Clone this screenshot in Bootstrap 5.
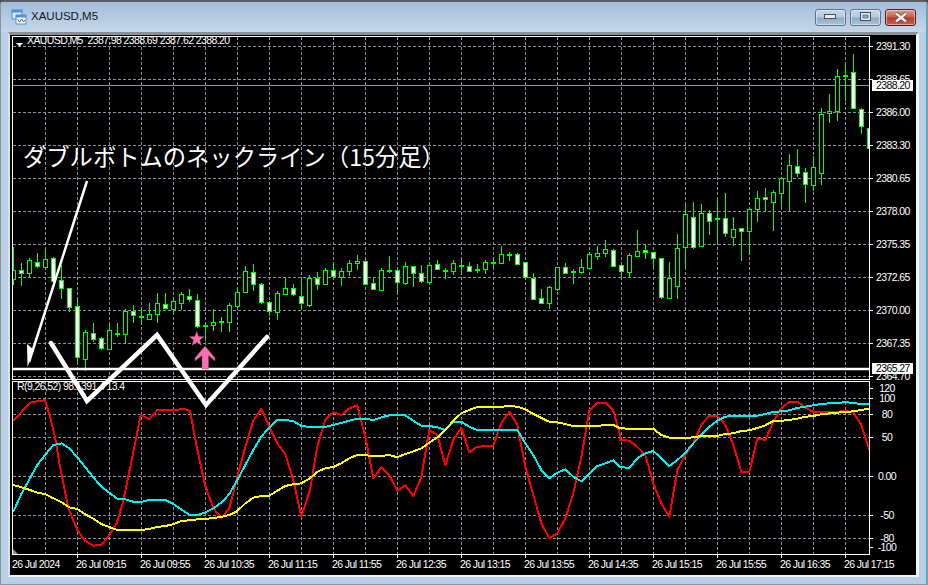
<!DOCTYPE html>
<html lang="ja">
<head>
  <meta charset="UTF-8">
  <title>XAUUSD,M5</title>
  <link rel="stylesheet" href="https://cdn.jsdelivr.net/npm/bootstrap@5.3.0/dist/css/bootstrap.min.css">
  <style>
    html, body { margin: 0; height: 585px; overflow: hidden; background: #4a4d52; }
    .mt-window {
      height: 585px;
      border-top: 2px solid #5b5f64;
      border-left: 1px solid #8c9299;
      border-right: 2px solid #5fa9bb;
      border-bottom: 1px solid #5fa9bb;
      border-radius: 5px 5px 0 0;
      background: #b9cfe6;
      font-family: "Liberation Sans", sans-serif;
    }
    .mt-title {
      height: 30px;
      padding: 0 10px 0 10px;
      background: linear-gradient(#a3bdd9, #c4d7ea);
      color: #10151c;
      font-size: 11.5px;
    }
    .mt-btn {
      width: 31px;
      height: 17px;
      padding: 0;
      border: 1px solid #5f7186;
      border-radius: 3px;
      background: linear-gradient(#c6d7e8 0, #b5cadf 48%, #8ea9c4 52%, #adc4da 100%);
      box-shadow: inset 0 0 0 1px rgba(255,255,255,.45);
    }
    .mt-btn-close {
      border-color: #4b1f2a;
      background: linear-gradient(#dc9a8c 0, #c9604e 48%, #b33a2a 52%, #c4634f 100%);
    }
    .mt-client {
      margin: 0 6px 0 7px;
      width: 911px;
      height: 545px;
      border-top: 3px solid #8b9097;
      border-left: 2px solid #d8e0e8;
      border-right: 3px solid #f2f5f8;
      border-bottom: 2px solid #f2f5f8;
      background: #000;
    }
    .mt-client svg { display: block; }
    .mt-client text {
      font-family: "Liberation Sans", sans-serif;
      font-size: 10.5px;
      letter-spacing: -.6px;
      fill: #fff;
    }
    .mt-client text.note-text {
      font-family: "Noto Sans CJK JP", sans-serif;
      font-size: 23.3px;
      letter-spacing: 0;
    }
  </style>
</head>
<body>
  <div class="mt-window d-flex flex-column">
    <!-- title bar -->
    <div class="mt-title d-flex align-items-center flex-shrink-0">
      <svg width="16" height="16" viewBox="0 0 16 16" class="me-1 flex-shrink-0">
        <rect x="1" y="1" width="10" height="9" fill="#dbe9f8" stroke="#4f8fd6"/>
        <rect x="1" y="1" width="10" height="2.5" fill="#4f8fd6"/>
        <rect x="5" y="6" width="10" height="9" fill="#fff" stroke="#4f8fd6"/>
        <rect x="5" y="6" width="10" height="2.5" fill="#4f8fd6"/>
        <path d="M6.5 10l2 3 2-3 2 3 1.5-2" fill="none" stroke="#2f6fb8"/>
      </svg>
      <span>XAUUSD,M5</span>
      <div class="d-flex gap-1 ms-auto">
        <button class="mt-btn d-flex align-items-center justify-content-center">
          <svg width="13" height="6"><rect x=".5" y=".5" width="11" height="4" fill="#e8edf2" stroke="#44505e"/></svg>
        </button>
        <button class="mt-btn d-flex align-items-center justify-content-center">
          <svg width="12" height="10"><rect x=".5" y=".5" width="10" height="8" fill="#dfe6ee" stroke="#44505e"/><rect x="3" y="3" width="5" height="3" fill="#8ea9c4" stroke="#44505e" stroke-width=".6"/></svg>
        </button>
        <button class="mt-btn mt-btn-close d-flex align-items-center justify-content-center">
          <svg width="14" height="11"><path d="M2 1.5l10 8M12 1.5l-10 8" stroke="#5b3a3a" stroke-width="3.6"/><path d="M2 1.5l10 8M12 1.5l-10 8" stroke="#f4f4f4" stroke-width="2.4"/></svg>
        </button>
      </div>
    </div>
    <!-- chart -->
    <div class="mt-client flex-shrink-0">
      <svg id="chart" width="906" height="540" viewBox="10 35 906 540" xmlns="http://www.w3.org/2000/svg"></svg>
    </div>
  </div>

  <script src="https://cdn.jsdelivr.net/npm/bootstrap@5.3.0/dist/js/bootstrap.bundle.min.js"></script>
  <script>
    const GRID = '#8a92a2';
    const GREEN = '#00ff00';

    // high, body top, body bottom, low, filled (screen pixels, one per bar)
    const bars = [
      [247,270,279,285,0],[263,270,273,286,1],[258,260,273,277,0],[253,262,266,268,1],[250,259,267,270,0],
      [257,258,281,284,1],[265,280,288,299,1],[288,288,307,312,1],[300,306,357,363,1],[330,332,359,371,0],
      [323,333,339,342,1],[337,338,348,350,1],[324,330,349,350,0],[323,333,334,337,0],[309,311,334,343,0],
      [305,311,315,323,1],[307,316,317,323,0],[303,314,319,319,0],[293,303,314,323,0],[293,304,308,309,1],
      [297,301,309,314,0],[292,294,303,310,0],[289,296,299,302,1],[294,300,326,328,1],[325,325,326,341,0],
      [309,322,325,331,0],[317,321,322,332,0],[303,305,322,332,0],[287,292,306,308,0],[266,271,292,293,0],
      [264,272,284,291,1],[283,284,302,304,1],[301,302,311,316,1],[291,293,312,320,0],[277,288,294,295,0],
      [284,288,294,296,1],[279,296,303,310,1],[275,278,305,307,0],[272,278,284,290,1],[268,270,284,285,0],
      [262,270,276,278,1],[268,271,277,286,0],[260,263,271,276,0],[255,261,263,270,0],[258,261,284,285,1],
      [278,283,289,290,1],[268,270,290,290,0],[256,270,271,273,0],[269,270,282,292,1],[262,266,283,285,0],
      [266,266,273,287,1],[265,273,281,283,1],[263,265,282,285,0],[260,264,269,270,1],[268,270,271,279,0],
      [260,263,271,275,0],[260,265,266,273,0],[262,266,271,272,1],[264,269,270,273,0],[260,262,269,274,0],
      [258,262,263,267,0],[246,254,263,263,0],[252,254,255,261,0],[253,254,264,264,1],[262,262,277,278,1],
      [273,278,299,299,1],[289,298,303,303,1],[286,287,303,309,0],[267,267,289,291,0],[263,267,273,273,1],
      [269,271,272,284,0],[259,267,272,274,0],[252,254,268,268,0],[246,253,256,260,0],[240,249,253,257,0],
      [249,250,266,266,1],[264,265,271,279,1],[253,255,272,278,0],[230,251,256,256,0],[245,250,252,259,1],
      [252,252,258,267,1],[258,258,297,299,1],[262,278,298,299,0],[234,248,286,299,0],[204,214,247,267,0],
      [202,217,247,249,1],[204,213,246,247,0],[210,213,221,235,1],[198,218,219,242,0],[193,218,233,237,1],
      [217,229,237,246,0],[228,228,231,261,1],[207,209,231,255,0],[191,198,209,222,0],[188,197,199,212,1],
      [190,192,202,231,0],[177,178,193,207,0],[154,165,181,212,0],[149,166,173,177,1],[168,172,184,203,1],
      [156,167,185,191,0],[108,114,173,185,0],[94,111,113,123,0],[69,76,111,121,0],[62,75,76,101,0],
      [54,72,108,109,1],[108,109,126,134,1],[116,128,148,154,1]
    ];

    // indicator lines, read off three 310px wide slices: [slice x origin, x,y, x,y ...] at 3x
    const redLine = [
      [0, 40,123,65,95,90,68,112,64,135,61,150,110,165,170,180,260,205,385,232,450,255,482,280,497,305,494,330,462,350,430,368,370,395,240,422,105,448,117,472,90,500,90,530,90,550,86,570,92,590,200,615,315,640,385,664,415,688,385,712,290,736,200,760,122,784,86,808,140,832,190,856,222,880,300,904,410,930,330],
      [310, 22,200,46,118,70,97,94,105,118,85,142,76,166,170,190,295,214,262,238,285,262,332,286,316,310,348,334,292,358,150,382,165,406,256,430,180,454,143,478,217,502,200,526,199,550,197,574,130,598,95,622,135,646,260,670,345,694,430,718,475,742,460,766,415,790,340,814,232,838,93,862,68,886,68,910,92,930,165],
      [620, 0,180,28,182,52,200,76,225,100,310,124,370,148,410,172,270,196,225,220,190,244,135,268,107,292,107,316,135,340,195,364,276,388,276,412,175,436,180,460,125,484,85,508,65,532,65,556,82,580,96,604,96,628,96,652,95,676,93,700,97,724,135,748,208]
    ];
    const cyanLine = [
      [0, 40,395,65,340,90,295,112,255,135,225,160,195,185,190,208,205,232,232,256,262,280,292,304,320,328,338,352,356,376,358,400,365,424,366,448,360,472,359,496,360,520,372,544,388,568,404,592,405,616,397,640,385,664,368,688,342,712,300,736,255,760,210,784,170,808,142,832,120,856,120,880,123,904,138,930,141],
      [310, 46,141,70,135,94,129,118,122,142,116,166,116,190,120,214,112,238,106,262,106,286,106,310,122,334,137,358,138,382,142,406,150,430,127,454,125,478,140,502,150,526,150,550,150,574,150,598,150,622,150,646,190,670,225,694,270,718,295,742,278,766,268,790,290,814,304,838,282,862,258,886,250,910,241,930,260],
      [620, 28,265,52,235,76,220,100,213,124,235,148,258,172,240,196,218,220,190,244,165,268,140,292,122,316,110,340,107,364,107,388,107,412,107,436,102,460,96,484,94,508,91,532,84,556,80,580,76,604,72,628,70,652,70,676,66,700,69,724,72,748,72]
    ];
    const yellowLine = [
      [0, 40,315,65,322,90,330,112,338,135,342,160,355,185,367,208,382,232,387,256,403,280,416,304,432,328,441,352,450,376,451,400,451,424,450,448,447,472,441,496,438,520,433,544,423,568,421,592,418,616,417,640,414,664,411,688,405,712,393,736,370,760,353,784,348,808,347,832,332,856,318,880,313,904,310,930,295],
      [310, 22,275,46,265,70,261,94,250,118,235,142,225,166,226,190,228,214,228,238,225,262,232,286,222,310,214,334,205,358,188,382,172,406,150,430,122,454,100,478,90,502,81,526,80,550,80,574,80,598,78,622,80,646,88,670,102,694,114,718,125,742,127,766,132,790,138,814,138,838,138,862,138,886,135,910,135,930,145],
      [620, 28,146,52,146,76,146,100,146,124,165,148,173,172,174,196,174,220,172,244,168,268,168,292,168,316,162,340,160,364,153,388,151,412,144,436,136,460,123,484,122,508,120,532,116,556,110,580,108,604,103,628,100,652,98,676,96,700,94,724,90,748,86]
    ];

    const priceAxis = [[46,'2391.30'],[79,'2388.65'],[112,'2386.00'],[145,'2383.30'],[178,'2380.65'],[211,'2378.00'],[244,'2375.35'],[277,'2372.65'],[310,'2370.00'],[343,'2367.35'],[376,'2364.70']];
    const subAxis = [[398,'100',1],[414,'80',1],[437,'50',1],[476,'0.00',1],[515,'-50',1],[538,'-80',1],[547,'-100',0],[388,'120',0]];
    const times = ['09:15','09:55','10:35','11:15','11:55','12:35','13:15','13:55','14:35','15:15','15:55','16:35','17:15'];

    let out = '<defs><clipPath id="mainClip"><rect x="13" y="36" width="857" height="343"/></clipPath>' +
      '<clipPath id="subClip"><rect x="13" y="382" width="857" height="172"/></clipPath></defs>';

    function hline(y, x1, x2, color, dash, w) {
      return `<line x1="${x1}" x2="${x2}" y1="${y + .5}" y2="${y + .5}" stroke="${color}" stroke-width="${w || 1}"${dash ? ' stroke-dasharray="3 2"' : ''}/>`;
    }
    function label(x, y, t, anchor) {
      return `<text x="${x}" y="${y + 4}"${anchor ? ` text-anchor="${anchor}"` : ''}>${t}</text>`;
    }
    function linePoints(slices) {
      const pts = [];
      slices.forEach(s => {
        for (let i = 1; i < s.length; i += 2) {
          pts.push((s[0] + s[i] / 3).toFixed(1) + ',' + (380 + s[i + 1] / 3).toFixed(1));
        }
      });
      return pts.join(' ');
    }
    function indicator(slices, color) {
      return `<polyline points="${linePoints(slices)}" fill="none" stroke="${color}" stroke-width="2" stroke-linejoin="round" shape-rendering="crispEdges"/>`;
    }

    // grid
    priceAxis.forEach(p => out += hline(p[0], 13, 870, GRID, true));
    subAxis.filter(p => p[2]).forEach(p => out += hline(p[0], 13, 870, GRID, true));
    for (let x = 45; x < 870; x += 32) {
      out += `<line x1="${x + .5}" x2="${x + .5}" y1="37" y2="379" stroke="${GRID}" stroke-dasharray="3 2"/>`;
      out += `<line x1="${x + .5}" x2="${x + .5}" y1="382" y2="554" stroke="${GRID}" stroke-dasharray="3 2"/>`;
    }
    out += hline(85, 13, 870, '#8a92a2');

    // candles
    out += '<g clip-path="url(#mainClip)">';
    bars.forEach((b, i) => {
      const cx = 13.5 + 8 * i;
      out += `<line x1="${cx}" x2="${cx}" y1="${b[0]}" y2="${b[3]}" stroke="${GREEN}"/>`;
      if (b[2] - b[1] <= 1) {
        out += `<rect x="${cx - 2.5}" y="${b[1]}" width="5" height="2" fill="${GREEN}"/>`;
      } else {
        out += `<rect x="${cx - 2}" y="${b[1] + .5}" width="4" height="${b[2] - b[1]}" fill="${b[4] ? '#fff' : '#000'}" stroke="${GREEN}"/>`;
      }
    });
    out += '</g>';

    // indicator pane
    out += '<g clip-path="url(#subClip)">' + indicator(redLine, '#ff0000') + indicator(cyanLine, '#00f0f0') + indicator(yellowLine, '#ffff00') + '</g>';

    // pane frames
    out += '<rect x="12.5" y="36.5" width="857" height="343" fill="none" stroke="#fff"/>';
    out += '<rect x="12.5" y="381.5" width="857" height="173" fill="none" stroke="#fff"/>';
    out += '<polygon points="13,549 18,554 13,554" fill="#8a92a2"/>';

    // axis labels
    priceAxis.forEach(p => {
      out += `<line x1="870" x2="873" y1="${p[0] + .5}" y2="${p[0] + .5}" stroke="#fff"/>` + label(876, p[0], p[1]);
    });
    subAxis.forEach(p => {
      out += `<line x1="870" x2="873" y1="${p[0] + .5}" y2="${p[0] + .5}" stroke="#fff"/>` + label(887, p[0], p[1], 'middle');
    });
    out += label(12, 564, '26 Jul 2024');
    times.forEach((t, i) => {
      const x = 77 + 64 * i;
      out += `<line x1="${x + .5}" x2="${x + .5}" y1="554" y2="558" stroke="#fff"/>` + label(x - 1, 564, '26 Jul ' + t);
    });

    // current price and hand-drawn level boxes
    out += '<rect x="872" y="80" width="41" height="11" fill="#fff"/><text x="876" y="89" style="fill:#000">2388.20</text>';
    out += '<rect x="872" y="363" width="41" height="11" fill="#fff"/><text x="876" y="372" style="fill:#000">2365.27</text>';

    // chart captions
    out += '<polygon points="16,43 23,43 19.5,46.5" fill="#fff"/>';
    out += label(27, 40, 'XAUUSD,M5&#160;&#160;2387.98 2388.69 2387.62 2388.20');
    out += label(17, 386, 'R(9,26,52) 98.1391 4 13.4');

    // annotations drawn on the chart
    out += '<line x1="13" x2="870" y1="369" y2="369" stroke="#fff" stroke-width="2.5"/>';
    out += '<polyline points="51,343 87,401 157,335 206,405 267,337" fill="none" stroke="#fff" stroke-width="4.5" stroke-linecap="round" stroke-linejoin="miter"/>';
    out += '<line x1="87" y1="181" x2="29" y2="362" stroke="#fff" stroke-width="2.5"/>';
    out += '<polygon points="27,344 27.5,367 34,350" fill="#fff"/>';
    out += '<text class="note-text" x="23" y="166">ダブルボトムのネックライン（15分足）</text>';
    out += '<polygon points="196.7,331.5 198.6,336.5 204,336.7 199.8,340 201.3,345.3 196.7,342.3 192.1,345.3 193.6,340 189.4,336.7 194.8,336.5" fill="#f56fa8" stroke="#a34d77" stroke-width=".5"/>';
    out += '<polygon points="205,346 215,358 215,361 208.5,355.5 208.5,369 202,369 202,355.5 195,361 195,358" fill="#fb6db2" stroke="#9a4a72" stroke-width=".5"/>';

    document.getElementById('chart').innerHTML = out;
  </script>
</body>
</html>
